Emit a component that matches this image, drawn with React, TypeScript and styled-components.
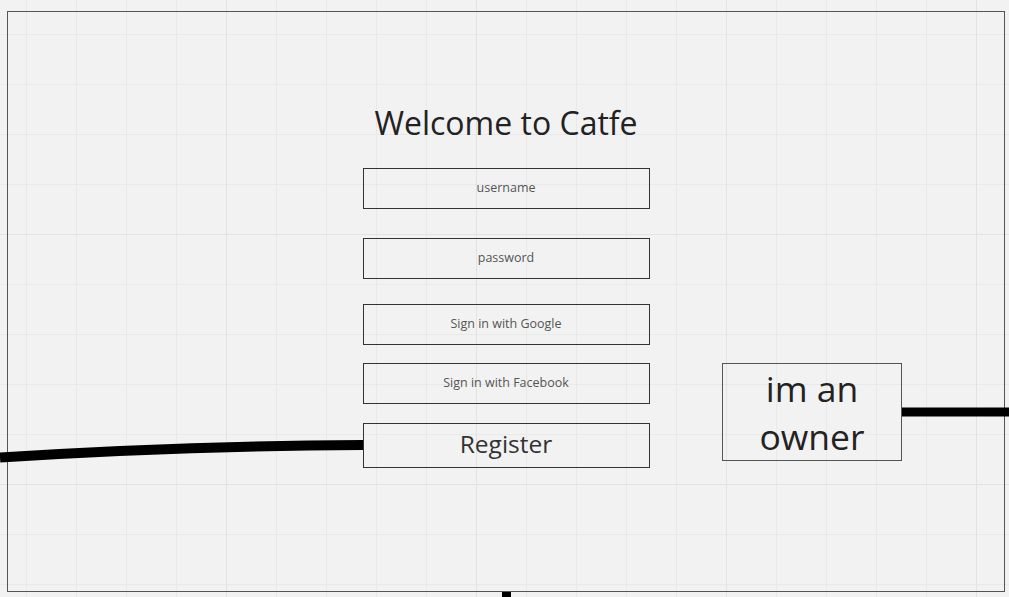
import React from "react";
import styled, { createGlobalStyle } from "styled-components";

const GlobalStyle = createGlobalStyle`
    html, body {
        margin: 0;
        padding: 0;
        overflow: hidden;
    }

    body {
        font-family: "Open Sans", "Noto Sans", sans-serif;
        background-color: #f2f2f2;
        background-image:
            linear-gradient(to right, #e3e3e3 1px, transparent 1px),
            linear-gradient(to bottom, #e3e3e3 1px, transparent 1px),
            linear-gradient(to right, #e9e9e9 1px, transparent 1px),
            linear-gradient(to bottom, #e9e9e9 1px, transparent 1px);
        background-size: 250px 250px, 250px 250px, 50px 50px, 50px 50px;
        background-position: 226px 0, 0 234px, 26px 0, 0 34px;
    }
`;

const Canvas = styled.div`
    position: relative;
    width: 1009px;
    height: 597px;
    overflow: hidden;
`;

const Frame = styled.section`
    position: relative;
    box-sizing: border-box;
    width: 998px;
    height: 581px;
    margin: 11px 0 0 7px;
    padding-top: 91px;
    border: 1px solid #555;
    display: flex;
    flex-direction: column;
    align-items: center;
`;

const Title = styled.h1`
    margin: 0 0 25px;
    font-size: 32px;
    line-height: 40px;
    font-weight: 400;
    color: #222;
`;

const Field = styled.div<{ $gap?: number; $big?: boolean }>`
    box-sizing: border-box;
    width: 287px;
    height: ${(p) => (p.$big ? 45 : 41)}px;
    margin-top: ${(p) => p.$gap ?? 0}px;
    padding-bottom: ${(p) => (p.$big ? 4 : 2)}px;
    border: 1px solid #333;
    display: flex;
    align-items: center;
    justify-content: center;
    font-size: ${(p) => (p.$big ? 24.5 : 12.5)}px;
    color: ${(p) => (p.$big ? "#333" : "#555")};
`;

const OwnerBox = styled.div`
    position: absolute;
    left: 714px;
    top: 351px;
    box-sizing: border-box;
    width: 180px;
    height: 98px;
    border: 1px solid #555;
    text-align: center;
    font-size: 35.5px;
    line-height: 48px;
    color: #222;
`;

const Wires = styled.svg`
    position: absolute;
    left: 0;
    top: 0;
    pointer-events: none;
`;

const App = () => {
    return (
        <>
            <GlobalStyle />
            <Canvas>
                <Frame>
                    <Title>Welcome to Catfe</Title>
                    <Field>username</Field>
                    <Field $gap={29}>password</Field>
                    <Field $gap={25}>Sign in with Google</Field>
                    <Field $gap={18}>Sign in with Facebook</Field>
                    <Field $gap={19} $big>Register</Field>
                    <OwnerBox>
                        im an
                        <br />
                        owner
                    </OwnerBox>
                </Frame>
                <Wires width="1009" height="597" viewBox="0 0 1009 597">
                    <path d="M 0 457.5 Q 180 446 363 445" stroke="#000" strokeWidth="10" fill="none" />
                    <path d="M 902 412 L 1009 412" stroke="#000" strokeWidth="9" fill="none" />
                    <path d="M 506.5 592 L 506.5 600" stroke="#000" strokeWidth="9" fill="none" />
                </Wires>
            </Canvas>
        </>
    );
};

export default App;
